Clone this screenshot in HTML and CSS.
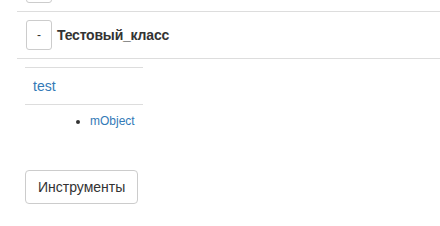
FILE: index.html
```html
<!DOCTYPE html>
<html lang="en">
<head>
  <meta charset="UTF-8">
  <title>Классы</title>
  <link rel="stylesheet" href="styles.css">
</head>
<body>

  <div class="classes">
    <div class="class-row">
      <button class="btn btn-sm" type="button">-</button>
    </div>
    <div class="class-row">
      <button class="btn btn-sm" type="button">-</button>
      <span class="class-name">Тестовый_класс</span>
    </div>
  </div>

  <table class="members">
    <tr>
      <td><a href="#">test</a></td>
    </tr>
    <tr>
      <td>
        <ul class="fields">
          <li><a href="#">mObject</a></li>
        </ul>
      </td>
    </tr>
  </table>

  <button class="btn tools" type="button">Инструменты</button>

</body>
</html>
```

FILE: styles.css
```css
body {
  margin: 0;
  font-family: "Liberation Sans", Arial, sans-serif;
  font-size: 14px;
  line-height: 20px;
  color: #333;
  background: #fff;
}
a {
  color: #337ab7;
  text-decoration: none;
}
.btn {
  font-family: inherit;
  font-size: 14px;
  line-height: 20px;
  padding: 6px 12px;
  color: #333;
  background: #fff;
  border: 1px solid #ccc;
  border-radius: 4px;
  cursor: pointer;
}
.btn-sm {
  font-size: 12px;
  line-height: 18px;
  padding: 5px 10px;
  border-radius: 3px;
}
.classes {
  margin: -35px 0 0 17px;
}
.class-row {
  display: flex;
  align-items: center;
  gap: 5px;
  padding: 8px 9px;
  border-top: 1px solid #ddd;
}
.class-row:first-child {
  border-top: none;
}
.class-row:last-child {
  border-bottom: 1px solid #ddd;
}
.class-name {
  font-weight: bold;
  letter-spacing: -0.2px;
}
.members {
  margin: 8px 0 0 25px;
  width: 118px;
  border-collapse: collapse;
}
.members td {
  padding: 8px;
  border-top: 1px solid #ddd;
}
.fields {
  margin: 0;
  padding-left: 57px;
  font-size: 12px;
  line-height: 17px;
}
.tools {
  display: block;
  margin: 32px 0 0 25px;
}
```
